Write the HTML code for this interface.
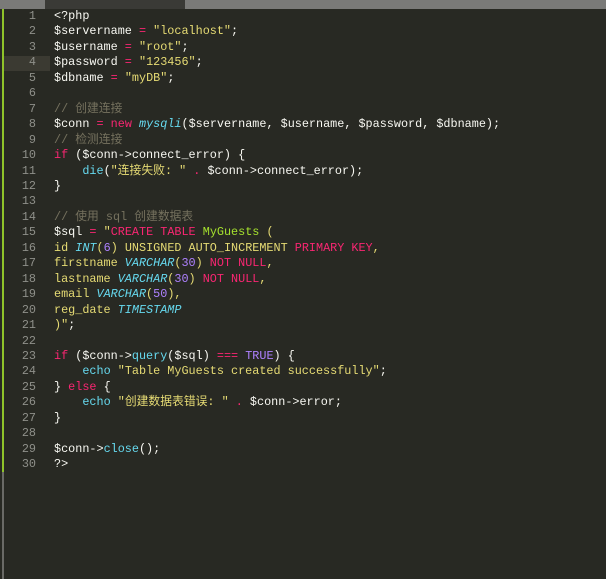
<!DOCTYPE html><html><head><meta charset="utf-8"><style>
body{margin:0;width:606px;height:579px;background:#282923;overflow:hidden;position:relative;font-family:"Liberation Mono","Noto Sans CJK SC",monospace;}
.top{position:absolute;left:0;top:0;width:606px;height:9px;background:#7a7a78}
.tab{position:absolute;left:45px;top:0;width:140px;height:9px;background:#3a3a36;border-radius:0 0 0 0}
.gl{position:absolute;left:2px;top:9px;width:2px;height:463px;background:#8fc32a}
.gl2{position:absolute;left:2px;top:472px;width:2px;height:107px;background:#6a6a66}
.hl{position:absolute;left:4px;top:56px;width:46px;height:15px;background:#3b3a32}
.code{position:absolute;left:0;top:9px;font-size:11.8px;line-height:15.45px;color:#f8f8f2;white-space:pre}
.n{display:inline-block;width:36px;text-align:right;color:#8f908a;margin-right:18px}
.p{color:#f92672}.y{color:#e6db74}.c{color:#66d9ef}.ci{color:#66d9ef;font-style:italic}.g{color:#a6e22e}.v{color:#ae81ff}.m{color:#75715e}
</style></head><body>
<div class="top"></div><div class="tab"></div><div class="gl"></div><div class="gl2"></div><div class="hl"></div>
<div class="code"><span class="n">1</span>&lt;?php
<span class="n">2</span>$servername <span class="p">=</span> <span class="y">"localhost"</span>;
<span class="n">3</span>$username <span class="p">=</span> <span class="y">"root"</span>;
<span class="n">4</span>$password <span class="p">=</span> <span class="y">"123456"</span>;
<span class="n">5</span>$dbname <span class="p">=</span> <span class="y">"myDB"</span>;
<span class="n">6</span>
<span class="n">7</span><span class="m">// 创建连接</span>
<span class="n">8</span>$conn <span class="p">=</span> <span class="p">new</span> <span class="ci">mysqli</span>($servername, $username, $password, $dbname);
<span class="n">9</span><span class="m">// 检测连接</span>
<span class="n">10</span><span class="p">if</span> ($conn-&gt;connect_error) {
<span class="n">11</span>    <span class="c">die</span>(<span class="y">"连接失败: "</span> <span class="p">.</span> $conn-&gt;connect_error);
<span class="n">12</span>}
<span class="n">13</span>
<span class="n">14</span><span class="m">// 使用 sql 创建数据表</span>
<span class="n">15</span>$sql <span class="p">=</span> <span class="y">"</span><span class="p">CREATE TABLE</span> <span class="g">MyGuests</span> <span class="y">(</span>
<span class="n">16</span><span class="y">id </span><span class="ci">INT</span><span class="y">(</span><span class="v">6</span><span class="y">) UNSIGNED AUTO_INCREMENT </span><span class="p">PRIMARY KEY</span><span class="y">,</span>
<span class="n">17</span><span class="y">firstname </span><span class="ci">VARCHAR</span><span class="y">(</span><span class="v">30</span><span class="y">) </span><span class="p">NOT NULL</span><span class="y">,</span>
<span class="n">18</span><span class="y">lastname </span><span class="ci">VARCHAR</span><span class="y">(</span><span class="v">30</span><span class="y">) </span><span class="p">NOT NULL</span><span class="y">,</span>
<span class="n">19</span><span class="y">email </span><span class="ci">VARCHAR</span><span class="y">(</span><span class="v">50</span><span class="y">),</span>
<span class="n">20</span><span class="y">reg_date </span><span class="ci">TIMESTAMP</span>
<span class="n">21</span><span class="y">)"</span>;
<span class="n">22</span>
<span class="n">23</span><span class="p">if</span> ($conn-&gt;<span class="c">query</span>($sql) <span class="p">===</span> <span class="v">TRUE</span>) {
<span class="n">24</span>    <span class="c">echo</span> <span class="y">"Table MyGuests created successfully"</span>;
<span class="n">25</span>} <span class="p">else</span> {
<span class="n">26</span>    <span class="c">echo</span> <span class="y">"创建数据表错误: "</span> <span class="p">.</span> $conn-&gt;error;
<span class="n">27</span>}
<span class="n">28</span>
<span class="n">29</span>$conn-&gt;<span class="c">close</span>();
<span class="n">30</span>?&gt;</div>
</body></html>
